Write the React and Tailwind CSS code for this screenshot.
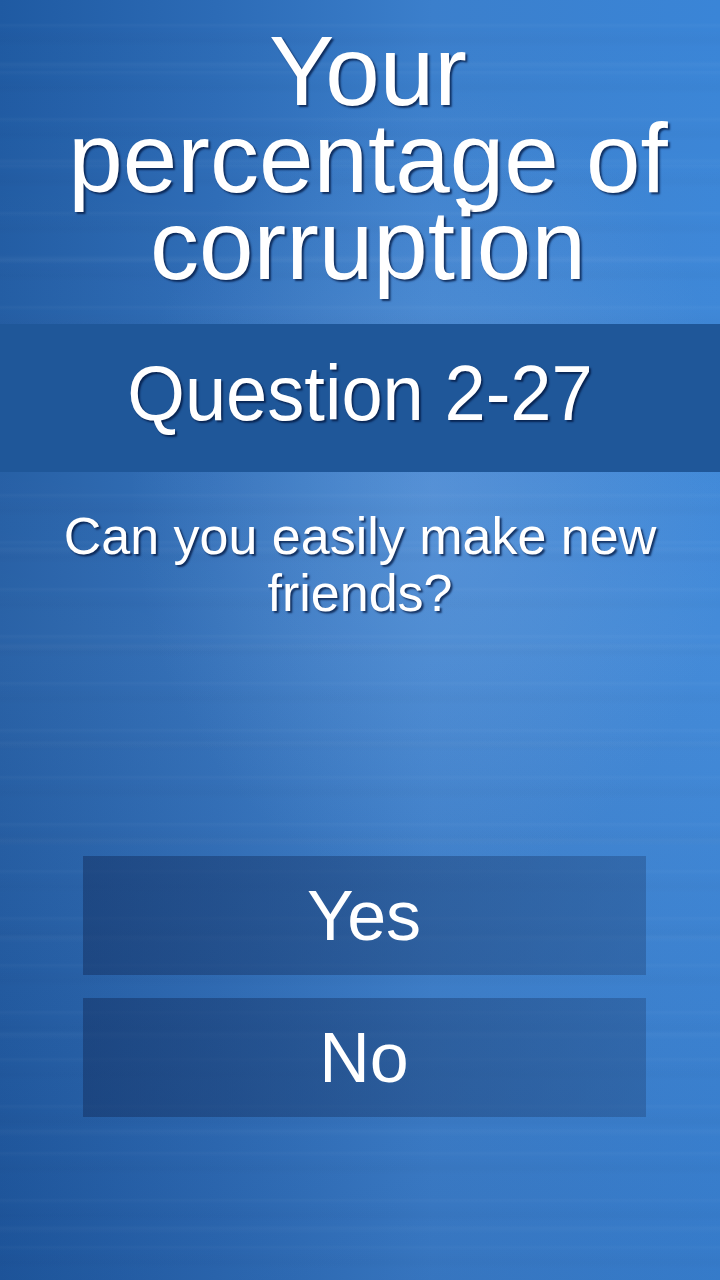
export default function App() {
  const shadow = "[text-shadow:2px_2px_2px_rgba(0,20,60,0.75)]";
  return (
    <div
      className="relative w-[720px] h-[1280px] overflow-hidden bg-[linear-gradient(90deg,#1f5aa2_0%,#2c6bb6_30%,#3b7fcc_60%,#3a85d7_100%)]"
      style={{ fontFamily: '"Liberation Sans", Arial, sans-serif' }}
    >
      <div className="absolute inset-0 bg-[radial-gradient(ellipse_60%_45%_at_60%_38%,rgba(120,170,230,0.32),rgba(120,170,230,0)_70%)]" />
      <div className="absolute inset-0 opacity-50 bg-[repeating-linear-gradient(180deg,rgba(255,255,255,0)_0px,rgba(255,255,255,0)_23px,rgba(255,255,255,0.05)_25px,rgba(255,255,255,0)_29px,rgba(0,0,40,0.04)_41px,rgba(255,255,255,0)_47px)]" />
      <div className="absolute inset-0 opacity-50 bg-[repeating-linear-gradient(180deg,rgba(255,255,255,0)_0px,rgba(255,255,255,0)_61px,rgba(255,255,255,0.06)_64px,rgba(255,255,255,0)_70px,rgba(255,255,255,0)_97px)]" />
      <div className="absolute inset-0 bg-[linear-gradient(180deg,rgba(255,255,255,0)_0%,rgba(255,255,255,0.05)_50%,rgba(0,0,40,0.08)_100%)]" />

      <div className="relative flex flex-col items-center">
        <h1
          className={`mt-[28px] pl-[16px] text-white text-center text-[98px] leading-[87px] font-normal ${shadow}`}
        >
          Your
          <br />
          percentage of
          <br />
          corruption
        </h1>

        <div className="mt-[35px] w-full h-[148px] bg-[#1f5799] flex items-center justify-center pb-[10px]">
          <div
            className={`text-white text-[78px] leading-none scale-x-[0.95] ${shadow}`}
          >
            Question 2-27
          </div>
        </div>

        <p
          className={`mt-[36px] text-white text-center text-[52px] leading-[57px] ${shadow}`}
        >
          Can you easily make new
          <br />
          friends?
        </p>

        <div className="mt-[234px] ml-[8px] flex flex-col gap-[23px] w-[563px]">
          <button className="h-[119px] w-full bg-[linear-gradient(90deg,rgba(20,50,100,0.55),rgba(35,75,130,0.45))] text-white text-[70px] leading-none flex items-center justify-center">
            Yes
          </button>
          <button className="h-[119px] w-full bg-[linear-gradient(90deg,rgba(20,50,100,0.55),rgba(35,75,130,0.45))] text-white text-[70px] leading-none flex items-center justify-center">
            No
          </button>
        </div>
      </div>
    </div>
  );
}
